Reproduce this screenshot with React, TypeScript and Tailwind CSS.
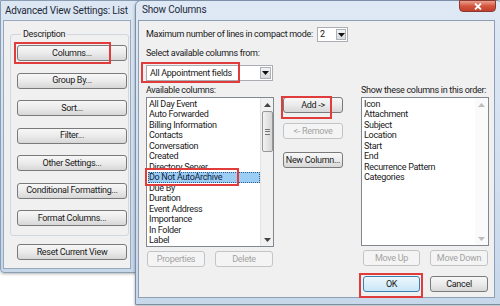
import clsx from "clsx";
import type { ReactNode } from "react";

const available = [
  "All Day Event",
  "Auto Forwarded",
  "Billing Information",
  "Contacts",
  "Conversation",
  "Created",
  "Directory Server",
  "Do Not AutoArchive",
  "Due By",
  "Duration",
  "Event Address",
  "Importance",
  "In Folder",
  "Label",
];

const shown = [
  "Icon",
  "Attachment",
  "Subject",
  "Location",
  "Start",
  "End",
  "Recurrence Pattern",
  "Categories",
];

function Btn({
  children,
  className,
  disabled,
  def,
}: {
  children: ReactNode;
  className?: string;
  disabled?: boolean;
  def?: boolean;
}) {
  return (
    <div
      className={clsx(
        "flex h-[16px] items-center justify-center rounded-[3px] border text-[9px] leading-none whitespace-nowrap",
        disabled
          ? "border-[#c2c5c8] bg-[#f4f4f4] text-[#a3a3a3]"
          : def
            ? "border-[#3c7fb1] bg-linear-to-b from-[#edf7fd] to-[#c9e6f7] text-[#1a1a1a]"
            : "border-[#7a7a7a] bg-linear-to-b from-[#f7f7f7] via-[#ebebeb] to-[#d7d7d7] text-[#1a1a1a]",
        className
      )}
    >
      {children}
    </div>
  );
}

function DropArrow({ className }: { className?: string }) {
  return (
    <div
      className={clsx(
        "flex items-center justify-center border border-[#a9b1ba] bg-linear-to-b from-[#f3f3f3] to-[#d9d9d9]",
        className
      )}
    >
      <svg width="7" height="4" viewBox="0 0 7 4">
        <path d="M0 0h7L3.5 4z" fill="#111" />
      </svg>
    </div>
  );
}

function Arrow({ up, muted }: { up?: boolean; muted?: boolean }) {
  return (
    <svg width="7" height="4" viewBox="0 0 7 4">
      <path d={up ? "M0 4h7L3.5 0z" : "M0 0h7L3.5 4z"} fill={muted ? "#bdbdbd" : "#444"} />
    </svg>
  );
}

function Mark({ className }: { className: string }) {
  return <div className={clsx("pointer-events-none absolute border-2 border-[#e03c3c]", className)} />;
}

export default function App() {
  return (
    <div className="relative h-[306px] w-[500px] overflow-hidden bg-white font-['Roboto',sans-serif] tracking-[-0.3px] text-[#1a1a1a]">
      {/* Advanced View Settings window (behind) */}
      <div className="absolute left-0 top-0 h-[273px] w-[140px] rounded-b-[4px] border border-[#8b9db3] bg-linear-to-b from-[#dce7f3] to-[#c6d7ea] shadow-[0_1px_3px_rgba(0,0,0,0.3)]">
        <div className="flex h-[19px] items-center pl-[4px] text-[10px] leading-none tracking-[-0.2px] whitespace-nowrap text-[#1e2a3a]">
          Advanced View Settings: List
        </div>
        <div className="ml-[2px] h-[249px] w-[128px] border border-[#98a9bd] bg-[#f0f0f0]">
          <fieldset className="ml-[6px] mt-[7px] h-[208px] w-[119px] rounded-[3px] border border-[#d0d7de] pl-[6px]">
            <legend className="ml-[4px] px-[2px] text-[9px] leading-[12px]">Description</legend>
            <div className="mt-[5px] flex flex-col gap-[11.5px]">
              <Btn className="w-[110px]">Columns...</Btn>
              <Btn className="w-[110px]">Group By...</Btn>
              <Btn className="w-[110px]">Sort...</Btn>
              <Btn className="w-[110px]">Filter...</Btn>
              <Btn className="w-[110px]">Other Settings...</Btn>
              <Btn className="w-[110px]">Conditional Formatting...</Btn>
              <Btn className="w-[110px]">Format Columns...</Btn>
            </div>
          </fieldset>
          <div className="ml-[13px] mt-[8px]">
            <Btn className="w-[110px]">Reset Current View</Btn>
          </div>
        </div>
      </div>

      {/* Show Columns dialog */}
      <div className="absolute left-[135px] top-0 h-[305px] w-[368px] rounded-t-[6px] border border-[#7d8fa6] bg-linear-to-b from-[#dfe9f5] to-[#c7d8eb] shadow-[0_1px_3px_rgba(0,0,0,0.35)]">
        <div className="flex h-[19px] items-start">
          <div className="pl-[6px] pt-[4px] text-[10px] leading-none tracking-[-0.2px] text-[#1e2a3a]">Show Columns</div>
          <div className="ml-auto mr-[6px] -mt-[1px] flex h-[12px] w-[37px] items-center justify-center rounded-b-[4px] border border-[#8a3a30] bg-linear-to-b from-[#e9a08f] via-[#d4553f] to-[#c2402b]">
            <svg width="8" height="7" viewBox="0 0 8 7">
              <path d="M1 0.5l6 6M7 0.5l-6 6" stroke="#fff" strokeWidth="1.8" />
            </svg>
          </div>
        </div>
        <div className="ml-[2px] h-[278px] w-[357px] border border-[#8e9fb5] bg-[#f0f0f0] pl-[7px]">
          <div className="mt-[6px] flex h-[15px] items-center">
            <div className="w-[171px] text-[9px] leading-none whitespace-nowrap">
              Maximum number of lines in compact mode:
            </div>
            <div className="flex h-[15px] w-[31px] items-center justify-between border border-[#abadb3] bg-white pl-[2px] pr-[1px]">
              <span className="text-[9px] leading-none">2</span>
              <DropArrow className="h-[11px] w-[10px]" />
            </div>
          </div>
          <div className="mt-[5px] h-[12px] text-[9px] leading-[12px]">Select available columns from:</div>
          <div className="mt-[6px] flex h-[16px] w-[127px] items-center justify-between border border-[#abadb3] bg-white pl-[3px] pr-[1px]">
            <span className="text-[9px] leading-none">All Appointment fields</span>
            <DropArrow className="h-[12px] w-[11px]" />
          </div>

          <div className="mt-[3px] flex">
            {/* Available columns */}
            <div className="w-[128px]">
              <div className="h-[12px] text-[9px] leading-[12px]">Available columns:</div>
              <div className="mt-[1px] flex h-[150px] border border-[#828790] bg-white">
                <div className="flex-1 pl-[1px] pt-[0.5px]">
                  {available.map((name) => (
                    <div
                      key={name}
                      className={clsx(
                        "h-[10.5px] pl-[1px] text-[9px] leading-[10.5px] whitespace-nowrap",
                        name === "Do Not AutoArchive" &&
                          "outline outline-1 outline-dotted outline-[#2f5d8a] -outline-offset-1 bg-[#9ccdf5] text-[#0d2440]"
                      )}
                    >
                      {name}
                    </div>
                  ))}
                </div>
                <div className="flex w-[13px] flex-col items-center border-l border-[#e3e3e3] bg-[#f1f1f1]">
                  <div className="flex h-[13px] items-center">
                    <Arrow up />
                  </div>
                  <div className="flex h-[41px] w-[11px] flex-col items-center justify-center gap-[1.5px] rounded-[2px] border border-[#979797] bg-linear-to-r from-[#f2f2f2] to-[#d6d6d6]">
                    <div className="h-px w-[5px] bg-[#777]" />
                    <div className="h-px w-[5px] bg-[#777]" />
                    <div className="h-px w-[5px] bg-[#777]" />
                  </div>
                  <div className="flex-1" />
                  <div className="flex h-[13px] items-center">
                    <Arrow />
                  </div>
                </div>
              </div>
              <div className="mt-[4px] flex gap-[10px] pl-[1px]">
                <Btn disabled className="w-[58px]">Properties</Btn>
                <Btn disabled className="w-[58px]">Delete</Btn>
              </div>
            </div>

            {/* Middle buttons */}
            <div className="ml-[9px] flex w-[60px] flex-col pt-[13px]">
              <Btn>Add -&gt;</Btn>
              <Btn disabled className="mt-[10px]">&lt;- Remove</Btn>
              <Btn className="mt-[13px]">New Column...</Btn>
            </div>

            {/* Shown columns */}
            <div className="ml-[18px] w-[128px]">
              <div className="h-[12px] text-[9px] leading-[12px] whitespace-nowrap">Show these columns in this order:</div>
              <div className="mt-[1px] flex h-[149px] border border-[#828790] bg-white">
                <div className="flex-1 pl-[2px] pt-[0.5px]">
                  {shown.map((name) => (
                    <div key={name} className="h-[10.5px] text-[9px] leading-[10.5px] whitespace-nowrap">
                      {name}
                    </div>
                  ))}
                </div>
                <div className="flex w-[13px] flex-col items-center justify-between bg-[#fafafa]">
                  <div className="flex h-[13px] items-center">
                    <Arrow up muted />
                  </div>
                  <div className="flex h-[13px] items-center">
                    <Arrow muted />
                  </div>
                </div>
              </div>
              <div className="mt-[4px] flex gap-[10px] pl-[2px]">
                <Btn disabled className="w-[57px]">Move Up</Btn>
                <Btn disabled className="w-[58px]">Move Down</Btn>
              </div>
              <div className="mt-[10px] flex gap-[10px] pl-[2px]">
                <Btn def className="w-[57px]">OK</Btn>
                <Btn className="w-[58px]">Cancel</Btn>
              </div>
            </div>
          </div>
        </div>
      </div>

      {/* red annotation boxes */}
      <Mark className="left-[14px] top-[42px] h-[22px] w-[97px]" />
      <Mark className="left-[141px] top-[62px] h-[21px] w-[99px]" />
      <Mark className="left-[145px] top-[168px] h-[18px] w-[94px]" />
      <Mark className="left-[281px] top-[96px] h-[23px] w-[51px]" />
      <Mark className="left-[359px] top-[273px] h-[25px] w-[64px]" />
    </div>
  );
}
